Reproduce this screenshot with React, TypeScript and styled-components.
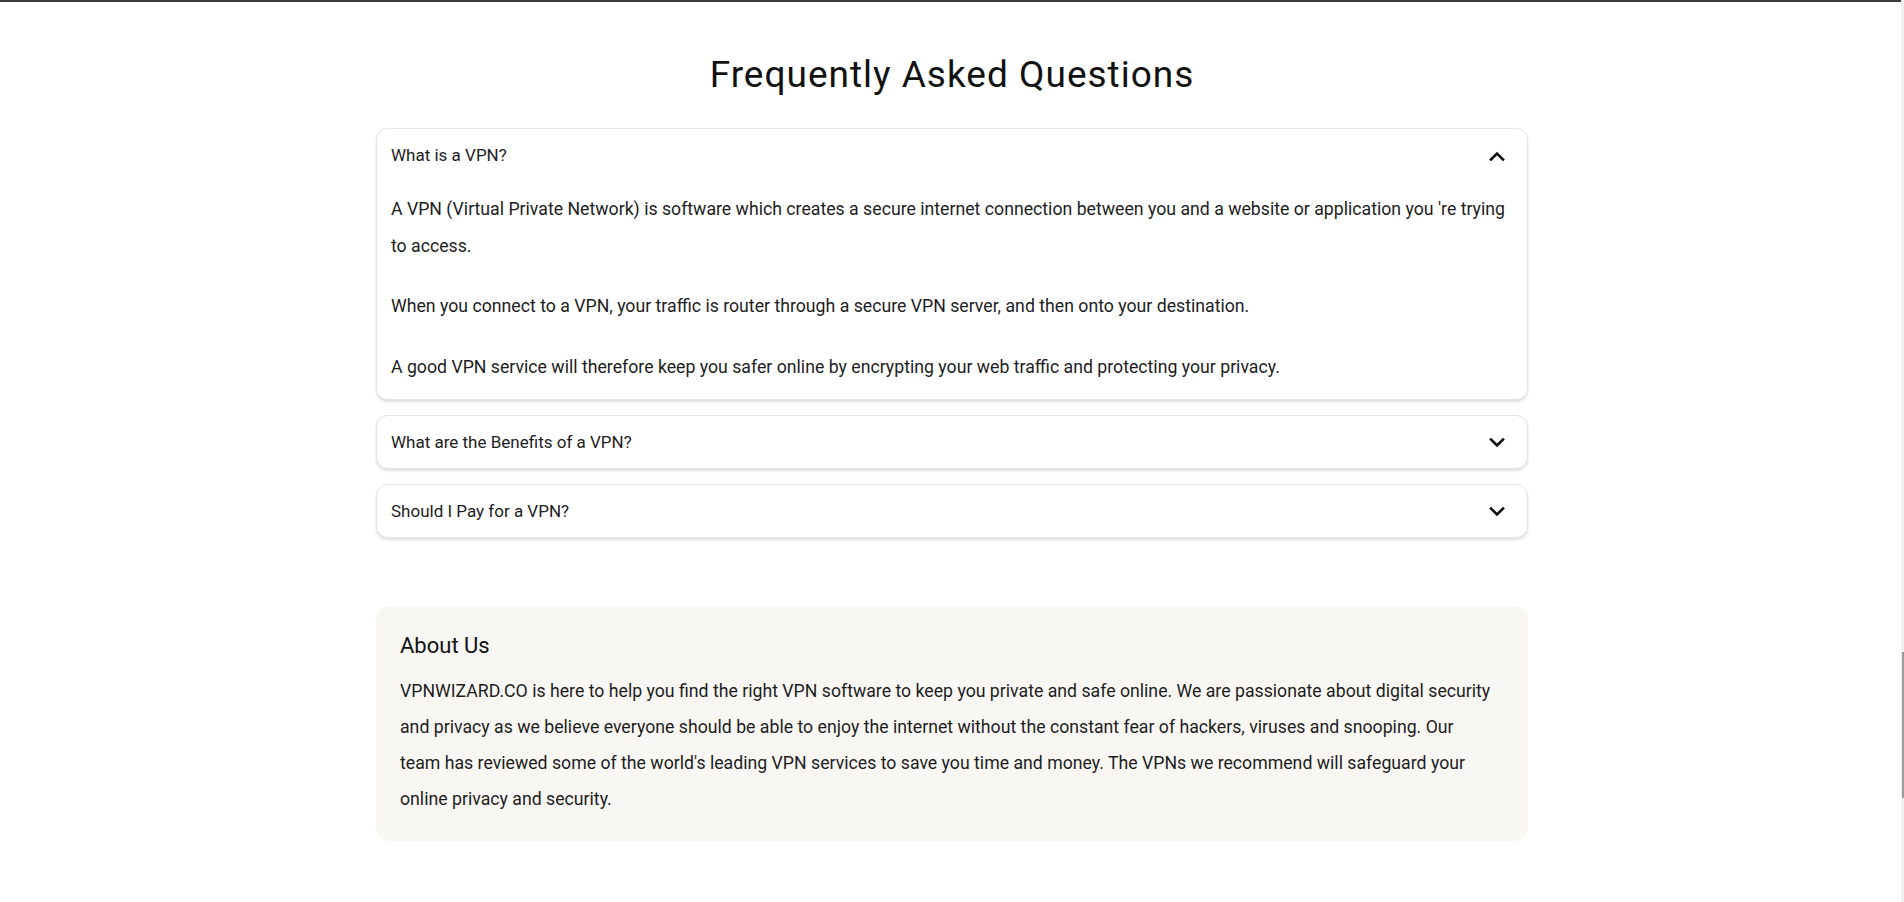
import { useState } from 'react';
import styled, { createGlobalStyle } from 'styled-components';

const GlobalStyle = createGlobalStyle`
  html, body {
    margin: 0;
    padding: 0;
    background: #ffffff;
  }
  body {
    font-family: Roboto, "Liberation Sans", Arial, sans-serif;
    color: #1d1d1d;
    -webkit-font-smoothing: antialiased;
  }
  * {
    box-sizing: border-box;
  }
`;

const TopBar = styled.div`
  height: 2px;
  background: #3a3a3a;
`;

const Page = styled.main`
  padding: 52px 0 60px;
`;

const Title = styled.h1`
  margin: 0;
  text-align: center;
  font-size: 37px;
  font-weight: 400;
  line-height: 42px;
  color: #111;
  letter-spacing: 1px;
`;

const Container = styled.div`
  width: 1152px;
  margin: 0 auto;
`;

const FaqList = styled.div`
  display: flex;
  flex-direction: column;
  gap: 15px;
  margin-top: 32px;
`;

const FaqCard = styled.div`
  background: #fff;
  border: 1px solid #e4e4e4;
  border-radius: 12px;
  box-shadow: 0 2px 3px rgba(0, 0, 0, 0.13);
`;

const FaqHeader = styled.button`
  display: flex;
  align-items: center;
  justify-content: space-between;
  width: 100%;
  padding: 16px 22px 16px 14px;
  border: none;
  background: none;
  cursor: pointer;
  font-family: inherit;
  font-size: 17px;
  line-height: 20px;
  color: #1d1d1d;
  text-align: left;
`;

const Chevron = styled.svg<{ $open: boolean }>`
  width: 16px;
  height: 10px;
  flex-shrink: 0;
  margin-top: 2px;
  transform: ${(p) => (p.$open ? 'none' : 'rotate(180deg)')};
`;

const FaqBody = styled.div`
  padding: 10px 8px 14px 14px;
`;

const Answer = styled.p`
  margin: 0 0 24px;
  font-size: 17.7px;
  line-height: 36.5px;
  color: #1d1d1d;
  &:last-child {
    margin-bottom: 0;
  }
`;

const About = styled.section`
  margin-top: 68px;
  padding: 27px 30px 24px 24px;
  background: #f8f7f3;
  border-radius: 14px;
`;

const AboutTitle = styled.h2`
  margin: 0 0 14px;
  font-size: 22px;
  font-weight: 400;
  line-height: 26px;
  color: #111;
`;

const AboutText = styled.p`
  margin: 0;
  font-size: 17.7px;
  line-height: 36px;
  color: #1d1d1d;
`;

const ScrollTrack = styled.div`
  position: fixed;
  top: 0;
  right: 0;
  bottom: 0;
  width: 3px;
  background: #f1f1f1;
`;

const ScrollThumb = styled.div`
  position: absolute;
  top: 652px;
  right: 0;
  width: 2px;
  height: 146px;
  background: #9c9c9c;
`;

type Faq = { q: string; a: string[] };

const faqs: Faq[] = [
  {
    q: 'What is a VPN?',
    a: [
      "A VPN (Virtual Private Network) is software which creates a secure internet connection between you and a website or application you 're trying to access.",
      'When you connect to a VPN, your traffic is router through a secure VPN server, and then onto your destination.',
      'A good VPN service will therefore keep you safer online by encrypting your web traffic and protecting your privacy.',
    ],
  },
  {
    q: 'What are the Benefits of a VPN?',
    a: [
      'A VPN hides your IP address, encrypts your traffic and lets you browse privately on any network.',
    ],
  },
  {
    q: 'Should I Pay for a VPN?',
    a: [
      'Paid VPNs are generally faster, safer and more reliable than free services.',
    ],
  },
];

const ChevronIcon = ({ open }: { open: boolean }) => (
  <Chevron $open={open} viewBox="0 0 16 10" fill="none">
    <polyline
      points="2,8.5 8,2.5 14,8.5"
      stroke="#111"
      strokeWidth="2.6"
      strokeLinejoin="miter"
      strokeLinecap="square"
    />
  </Chevron>
);

const App = () => {
  const [open, setOpen] = useState<number | null>(0);

  return (
    <>
      <GlobalStyle />
      <TopBar />
      <Page>
        <Title>Frequently Asked Questions</Title>
        <Container>
          <FaqList>
            {faqs.map((f, i) => (
              <FaqCard key={f.q}>
                <FaqHeader onClick={() => setOpen(open === i ? null : i)}>
                  <span>{f.q}</span>
                  <ChevronIcon open={open === i} />
                </FaqHeader>
                {open === i && (
                  <FaqBody>
                    {f.a.map((t) => (
                      <Answer key={t}>{t}</Answer>
                    ))}
                  </FaqBody>
                )}
              </FaqCard>
            ))}
          </FaqList>
          <About>
            <AboutTitle>About Us</AboutTitle>
            <AboutText>
              VPNWIZARD.CO is here to help you find the right VPN software to keep you private and
              safe online. We are passionate about digital security and privacy as we believe
              everyone should be able to enjoy the internet without the constant fear of hackers,
              viruses and snooping. Our team has reviewed some of the world's leading VPN services
              to save you time and money. The VPNs we recommend will safeguard your online privacy
              and security.
            </AboutText>
          </About>
        </Container>
      </Page>
      <ScrollTrack>
        <ScrollThumb />
      </ScrollTrack>
    </>
  );
};

export default App;
